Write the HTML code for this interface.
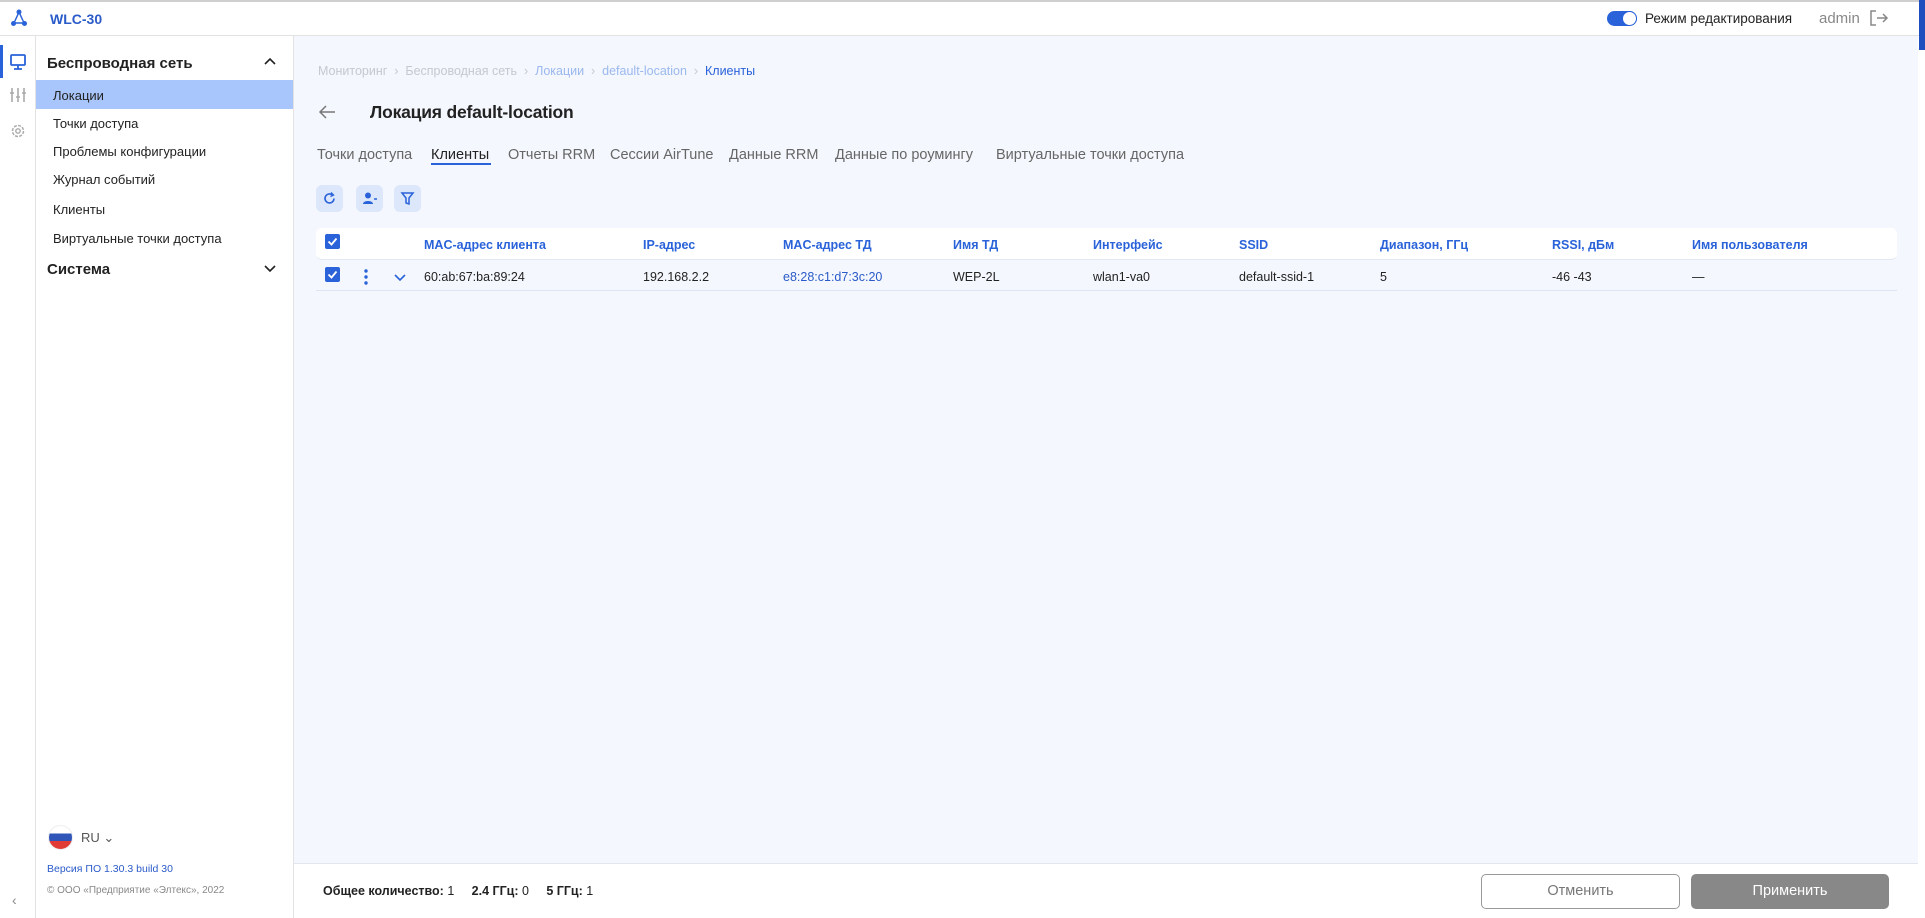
<!DOCTYPE html>
<html><head><meta charset="utf-8"><style>
*{box-sizing:border-box;margin:0;padding:0}
body{width:1925px;height:918px;overflow:hidden;font-family:"Liberation Sans","Noto Sans CJK SC",sans-serif;background:#fff;position:relative;color:#222}
.a{position:absolute;white-space:nowrap}
.hdr{left:0;top:0;width:1925px;height:36px;background:#fff;border-top:2px solid #cfcfcf;border-bottom:1px solid #e2e2e2}
.rail{left:0;top:36px;width:36px;height:882px;background:#fff;border-right:1px solid #e3e3e3}
.side{left:36px;top:36px;width:258px;height:882px;background:#fff;border-right:1px solid #e3e3e3}
.main{left:294px;top:36px;width:1624px;height:828px;background:#f4f7fd}
.item{left:53px;font-size:13px;color:#222}
.th{top:238px;font-size:12.5px;font-weight:bold;color:#2962d9}
.td{top:270px;font-size:12.5px;color:#222}
.tab{top:147px;font-size:14.5px;color:#666}
.btn{width:27px;height:27px;top:185px;background:#dce7fb;border-radius:6px}
.cb{width:15px;height:15px;background:#2962d9;border-radius:2px}
</style></head><body>
<div class="a hdr"></div>
<svg class="a" style="left:10px;top:9px" width="18" height="18" viewBox="0 0 18 18"><path d="M9 3L4 14M9 3L14 14M4 14H14" stroke="#2962d9" stroke-width="1.5" fill="none"/><circle cx="9" cy="3" r="2.5" fill="#2962d9"/><circle cx="3.5" cy="14.5" r="2.5" fill="#2962d9"/><circle cx="14.5" cy="14.5" r="2.5" fill="#2962d9"/></svg>
<div class="a" style="left:50px;top:11px;font-size:14px;font-weight:bold;color:#2a5bc9">WLC-30</div>
<div class="a" style="left:1607px;top:11px;width:30px;height:15px;border-radius:8px;background:#2962d9"></div>
<div class="a" style="left:1622px;top:11px;width:15px;height:15px;border-radius:50%;background:#fff;border:1.5px solid #2962d9"></div>
<div class="a" style="left:1645px;top:11px;font-size:13.5px;color:#222">Режим редактирования</div>
<div class="a" style="left:1819px;top:10px;font-size:15px;color:#888">admin</div>
<svg class="a" style="left:1869px;top:9px" width="20" height="18" viewBox="0 0 20 18"><path d="M7 2H2V16H7M8 9H18M14 5L18 9L14 13" stroke="#888" stroke-width="1.5" fill="none"/></svg>
<div class="a" style="left:1919px;top:0;width:6px;height:50px;background:#1f4fbf"></div>

<div class="a rail"></div>
<div class="a" style="left:0;top:45px;width:3px;height:33px;background:#2962d9"></div>
<svg class="a" style="left:9px;top:53px" width="18" height="18" viewBox="0 0 18 18"><rect x="2" y="2" width="14" height="10" stroke="#2962d9" stroke-width="1.8" fill="none" rx="1"/><path d="M9 12V16M5 16H13" stroke="#2962d9" stroke-width="1.8"/></svg>
<svg class="a" style="left:9px;top:86px" width="18" height="18" viewBox="0 0 18 18"><g stroke="#aaa" stroke-width="1.6"><path d="M3 2V16M9 2V16M15 2V16"/><path d="M1 7H5M7 11H11M13 7H17"/></g></svg>
<svg class="a" style="left:9px;top:122px" width="18" height="18" viewBox="0 0 18 18"><circle cx="9" cy="9" r="5.5" stroke="#aaa" stroke-width="1.5" fill="none" stroke-dasharray="3 1.3"/><circle cx="9" cy="9" r="2.2" stroke="#aaa" stroke-width="1.4" fill="none"/></svg>
<div class="a" style="left:12px;top:892px;font-size:14px;color:#888">‹</div>

<div class="a side"></div>
<div class="a" style="left:47px;top:55px;font-size:15px;font-weight:bold;color:#222">Беспроводная сеть</div>
<svg class="a" style="left:264px;top:57px" width="12" height="10"><path d="M1 7L6 2L11 7" stroke="#222" stroke-width="1.6" fill="none"/></svg>
<div class="a" style="left:36px;top:80px;width:257px;height:29px;background:#a8c6fb"></div>
<div class="a item" style="top:88px">Локации</div>
<div class="a item" style="top:116px">Точки доступа</div>
<div class="a item" style="top:144px">Проблемы конфигурации</div>
<div class="a item" style="top:172px">Журнал событий</div>
<div class="a item" style="top:202px">Клиенты</div>
<div class="a item" style="top:231px">Виртуальные точки доступа</div>
<div class="a" style="left:47px;top:261px;font-size:15px;font-weight:bold;color:#222">Система</div>
<svg class="a" style="left:264px;top:264px" width="12" height="10"><path d="M1 2L6 7L11 2" stroke="#222" stroke-width="1.6" fill="none"/></svg>
<div class="a" style="left:48px;top:825px;width:25px;height:25px;border-radius:50%;overflow:hidden;border:1px solid #eee;background:linear-gradient(#fff 0 33%,#2f55b8 33% 66%,#e03b35 66%)"></div>
<div class="a" style="left:81px;top:830px;font-size:13px;color:#555">RU ⌄</div>
<div class="a" style="left:47px;top:863px;font-size:10.5px;color:#2a5bc9">Версия ПО 1.30.3 build 30</div>
<div class="a" style="left:47px;top:885px;font-size:10px;color:#888">© ООО «Предприятие «Элтекс», 2022</div>

<div class="a main"></div>
<div class="a" style="left:318px;top:64px;font-size:12.5px;color:#c4c8d0">Мониторинг &nbsp;›&nbsp; Беспроводная сеть &nbsp;›&nbsp; <span style="color:#9bb8ee">Локации</span> &nbsp;›&nbsp; <span style="color:#9bb8ee">default-location</span> &nbsp;›&nbsp; <span style="color:#2962d9">Клиенты</span></div>
<svg class="a" style="left:318px;top:104px" width="18" height="16"><path d="M17 8H2M8 2L2 8L8 14" stroke="#777" stroke-width="1.5" fill="none"/></svg>
<div class="a" style="left:370px;top:102px;font-size:17.5px;font-weight:bold;color:#222;letter-spacing:-0.2px">Локация default-location</div>
<div class="a tab" style="left:317px">Точки доступа</div>
<div class="a tab" style="left:431px;color:#222">Клиенты</div>
<div class="a" style="left:431px;top:163px;width:60px;height:2px;background:#2962d9"></div>
<div class="a tab" style="left:508px">Отчеты RRM</div>
<div class="a tab" style="left:610px">Сессии AirTune</div>
<div class="a tab" style="left:729px">Данные RRM</div>
<div class="a tab" style="left:835px">Данные по роумингу</div>
<div class="a tab" style="left:996px">Виртуальные точки доступа</div>
<div class="a btn" style="left:316px"></div>
<svg class="a" style="left:322px;top:191px" width="15" height="15"><path d="M12 7.5A4.5 4.5 0 1 1 10 3.7" stroke="#2962d9" stroke-width="1.6" fill="none"/><path d="M9 1.5L11.5 4L8.5 5.5" stroke="#2962d9" stroke-width="1.4" fill="none"/></svg>
<div class="a btn" style="left:356px"></div>
<svg class="a" style="left:362px;top:191px" width="16" height="15"><circle cx="6" cy="4.5" r="3" fill="#2962d9"/><path d="M1 13C1 9 11 9 11 13Z" fill="#2962d9"/><path d="M12 8H15" stroke="#2962d9" stroke-width="1.5"/></svg>
<div class="a btn" style="left:394px"></div>
<svg class="a" style="left:400px;top:191px" width="15" height="15"><path d="M2 2H13L9 7V13L6 12V7Z" stroke="#2962d9" stroke-width="1.5" fill="none"/></svg>

<div class="a" style="left:316px;top:228px;width:1581px;height:32px;background:#fff;border-radius:6px;border-bottom:1px solid #e2e8f4"></div>
<div class="a cb" style="left:325px;top:234px"></div>
<svg class="a" style="left:325px;top:234px" width="15" height="15"><path d="M3.5 7.5L6.5 10.5L11.5 4.5" stroke="#fff" stroke-width="1.8" fill="none"/></svg>
<div class="a th" style="left:424px">MAC-адрес клиента</div>
<div class="a th" style="left:643px">IP-адрес</div>
<div class="a th" style="left:783px">MAC-адрес ТД</div>
<div class="a th" style="left:953px">Имя ТД</div>
<div class="a th" style="left:1093px">Интерфейс</div>
<div class="a th" style="left:1239px">SSID</div>
<div class="a th" style="left:1380px">Диапазон, ГГц</div>
<div class="a th" style="left:1552px">RSSI, дБм</div>
<div class="a th" style="left:1692px">Имя пользователя</div>
<div class="a" style="left:316px;top:290px;width:1581px;height:1px;background:#dde5f3"></div>
<div class="a cb" style="left:325px;top:267px"></div>
<svg class="a" style="left:325px;top:267px" width="15" height="15"><path d="M3.5 7.5L6.5 10.5L11.5 4.5" stroke="#fff" stroke-width="1.8" fill="none"/></svg>
<svg class="a" style="left:362px;top:268px" width="8" height="18"><circle cx="4" cy="3" r="1.7" fill="#2962d9"/><circle cx="4" cy="9" r="1.7" fill="#2962d9"/><circle cx="4" cy="15" r="1.7" fill="#2962d9"/></svg>
<svg class="a" style="left:394px;top:273px" width="12" height="9"><path d="M1 2L6 7L11 2" stroke="#2962d9" stroke-width="1.6" fill="none"/></svg>
<div class="a td" style="left:424px">60:ab:67:ba:89:24</div>
<div class="a td" style="left:643px">192.168.2.2</div>
<div class="a td" style="left:783px;color:#2a5bc9">e8:28:c1:d7:3c:20</div>
<div class="a td" style="left:953px">WEP-2L</div>
<div class="a td" style="left:1093px">wlan1-va0</div>
<div class="a td" style="left:1239px">default-ssid-1</div>
<div class="a td" style="left:1380px">5</div>
<div class="a td" style="left:1552px">-46 -43</div>
<div class="a td" style="left:1692px">—</div>

<div class="a" style="left:294px;top:863px;width:1624px;height:55px;background:#fff;border-top:1px solid #e2e6ee"></div>
<div class="a" style="left:323px;top:884px;font-size:12.5px;color:#222"><b>Общее количество:</b> 1 &nbsp;&nbsp;&nbsp;&nbsp;<b>2.4 ГГц:</b> 0 &nbsp;&nbsp;&nbsp;&nbsp;<b>5 ГГц:</b> 1</div>
<div class="a" style="left:1481px;top:874px;width:199px;height:35px;border:1px solid #999;border-radius:5px;background:#fff;text-align:center;line-height:33px;font-size:14.5px;color:#777">Отменить</div>
<div class="a" style="left:1691px;top:874px;width:198px;height:35px;border-radius:5px;background:#888;text-align:center;line-height:35px;font-size:14.5px;color:#fff">Применить</div>
</body></html>
